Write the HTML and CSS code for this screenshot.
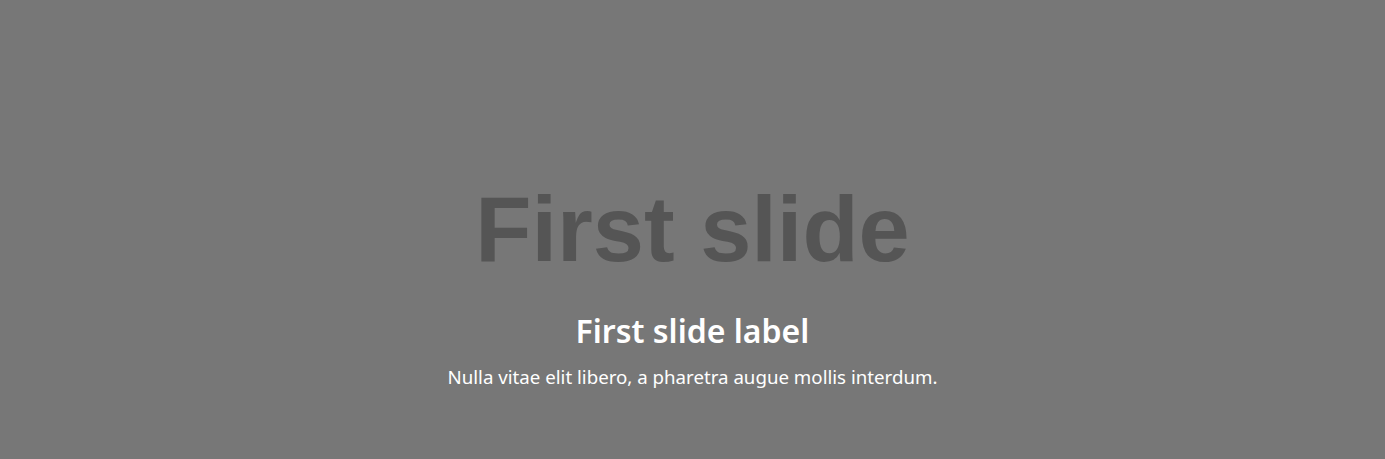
FILE: index.html
```html
<!DOCTYPE html>
<html lang="en">
<head>
<meta charset="utf-8">
<title>Carousel</title>
<link rel="stylesheet" href="styles.css">
</head>
<body>
<div class="carousel">
  <div class="carousel-item">
    <svg class="placeholder" width="100%" height="459" xmlns="http://www.w3.org/2000/svg" preserveAspectRatio="xMidYMid slice" role="img">
      <rect width="100%" height="100%" fill="#777"></rect>
      <text x="50%" y="261" text-anchor="middle" class="placeholder-text">First slide</text>
    </svg>
    <div class="carousel-caption">
      <h5 class="caption-title">First slide label</h5>
      <p class="caption-text">Nulla vitae elit libero, a pharetra augue mollis interdum.</p>
    </div>
  </div>
</div>
</body>
</html>
```

FILE: styles.css
```css
html, body {
  margin: 0;
  padding: 0;
  background: #777;
}
.carousel {
  width: 100%;
  height: 459px;
  overflow: hidden;
}
.carousel-item {
  position: relative;
  width: 100%;
  height: 459px;
}
.placeholder {
  display: block;
}
.placeholder-text {
  font-family: "Liberation Sans", Arial, sans-serif;
  font-weight: 700;
  font-size: 92px;
  fill: #555;
}
.carousel-caption {
  position: absolute;
  left: 15%;
  right: 15%;
  bottom: 20px;
  padding: 20px 0;
  text-align: center;
  color: #fff;
  font-family: "Noto Sans", "Open Sans", sans-serif;
}
.caption-title {
  margin: 0 0 13px;
  font-size: 32px;
  font-weight: 600;
  line-height: 1.2;
}
.caption-text {
  margin: 0 0 28px;
  font-size: 18.7px;
  line-height: 1.5;
}
```
